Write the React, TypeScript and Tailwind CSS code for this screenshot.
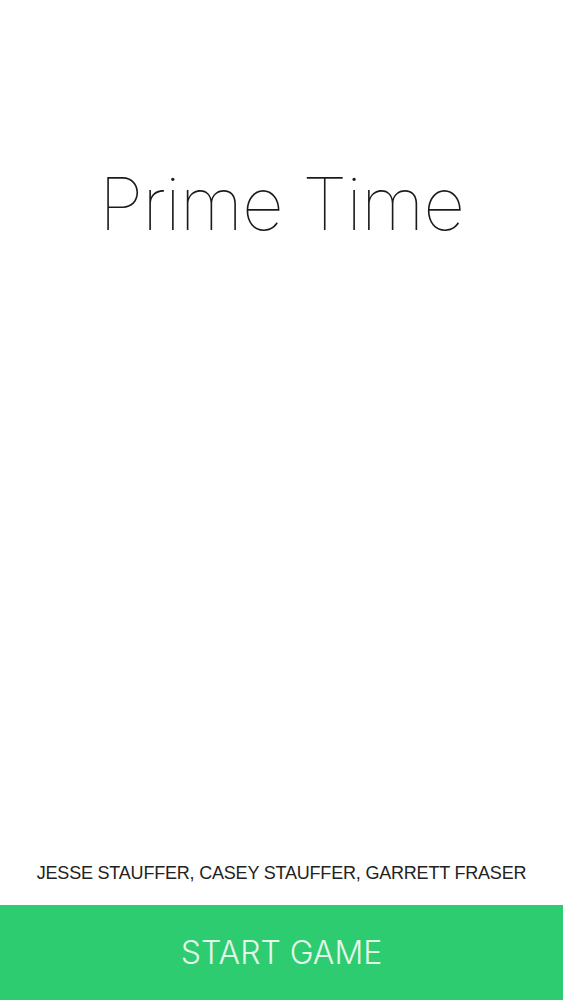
export default function App() {
  return (
    <div className="h-[1000px] w-full flex flex-col bg-white" style={{ fontFamily: 'Inter, "Liberation Sans", sans-serif' }}>
      {/* Title */}
      <div className="pt-[156px] flex justify-center">
        <h1 className="text-[73px] leading-[96px] font-thin text-[#1a1a1a] tracking-[-1px]">Prime Time</h1>
      </div>

      <div className="flex-1" />

      {/* Credits */}
      <p className="text-center text-[18px] leading-[24px] text-[#222] pb-[20px] font-['Liberation_Sans',sans-serif] tracking-[-0.2px]">
        JESSE STAUFFER, CASEY STAUFFER, GARRETT FRASER
      </p>

      {/* Start button */}
      <button className="h-[95px] w-full bg-[#2ecc71] flex items-center justify-center">
        <span className="text-[32px] font-light text-[#e3f7ea]">START GAME</span>
      </button>
    </div>
  );
}
